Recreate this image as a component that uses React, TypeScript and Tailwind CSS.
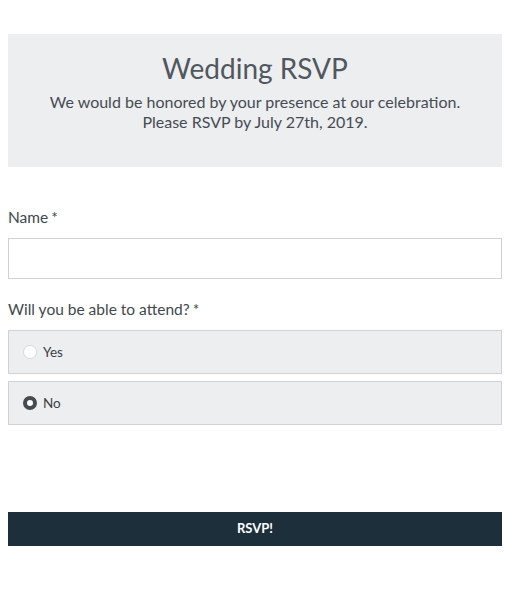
import React from "react";

export default function App() {
  return (
    <div className="bg-white w-[512px] h-[590px] pl-[8px] pt-[34px] text-[#4e555c]" style={{ fontFamily: "Lato, 'Open Sans', sans-serif" }}>
      <div className="w-[494px]">
        <div className="bg-[#edeef0] h-[133px] flex flex-col items-center pt-[17px]">
          <h1 className="text-[28px] leading-[34px] text-[#50575e]">Wedding RSVP</h1>
          <p className="text-[16px] leading-[20px] mt-[7px] text-center text-[#464c53]">
            We would be honored by your presence at our celebration.
            <br />
            Please RSVP by July 27th, 2019.
          </p>
        </div>
        <div className="mt-[40px] text-[15.5px] leading-[20px] text-[#42484e]">
          Name<span className="ml-[3px]">*</span>
        </div>
        <div className="mt-[11px] h-[41px] border border-[#d0d2d4] bg-white" />
        <div className="mt-[20px] text-[15.5px] leading-[20px] text-[#42484e]">
          Will you be able to attend?<span className="ml-[3px]">*</span>
        </div>
        <div className="mt-[11px] h-[44px] border border-[#d0d2d4] bg-[#edeef0] flex items-center pl-[14px] gap-[6px]">
          <span className="w-[14px] h-[14px] rounded-full bg-white border border-[#d6d8da]" />
          <span className="text-[13.5px] text-[#3a4046]">Yes</span>
        </div>
        <div className="mt-[7px] h-[44px] border border-[#d0d2d4] bg-[#edeef0] flex items-center pl-[14px] gap-[6px]">
          <span className="w-[14px] h-[14px] rounded-full bg-white border-[4px] border-[#444b51]" />
          <span className="text-[13.5px] text-[#3a4046]">No</span>
        </div>
        <button className="mt-[87px] w-full h-[34px] bg-[#1c2f3a] text-white text-[13px] font-bold">RSVP!</button>
      </div>
    </div>
  );
}
